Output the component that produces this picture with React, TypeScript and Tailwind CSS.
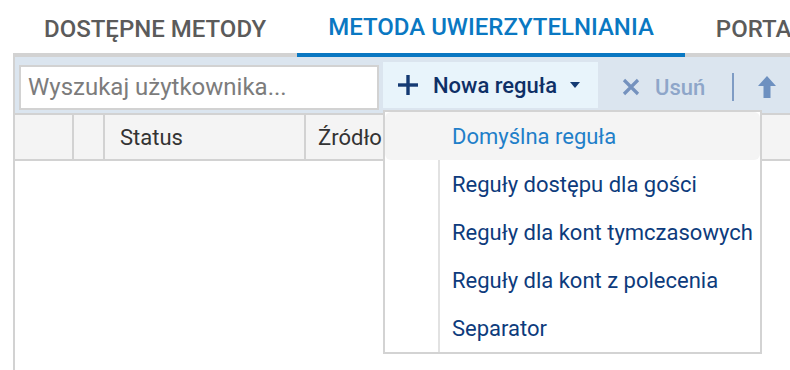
const tabs = ["Dostępne metody", "Metoda uwierzytelniania", "Portal"];
const menuItems = [
  "Domyślna reguła",
  "Reguły dostępu dla gości",
  "Reguły dla kont tymczasowych",
  "Reguły dla kont z polecenia",
  "Separator",
];

const App = () => {
  return (
    <div className="relative w-[790px] h-[370px] overflow-hidden bg-white font-['Roboto',sans-serif]">
      {/* tabs */}
      <div className="flex ml-[13px] border-b-4 border-[#d2d2d2]">
        {tabs.map((t, i) => (
          <div
            key={t}
            className={
              "relative -mb-1 h-[57px] px-[31px] pt-[1px] flex items-center uppercase font-medium text-[24px] whitespace-nowrap " +
              (i === 1
                ? "border-b-4 border-[#0a78c2] text-[#0a78c2]"
                : "text-[#5b5b5b]")
            }
          >
            {t}
          </div>
        ))}
      </div>

      <div className="ml-[13px] border-l-2 border-[#d2d2d2] h-full">
        {/* toolbar */}
        <div className="flex items-center h-[56px] bg-[#dbe5ef] pl-1 pt-[4px]">
          <div className="w-[360px] h-[45px] bg-white border-2 border-[#d2d2d2] flex items-center pl-[7px] text-[24px] text-[#7c7c7c]">
            Wyszukaj użytkownika...
          </div>
          <div className="ml-1 w-[215px] h-[46px] -mt-1 bg-[#e8f4fb] flex items-center pl-[15px] text-[#0e2f66]">
            <svg width="20" height="20" viewBox="0 0 20 20">
              <rect x="8.3" y="0" width="3.4" height="20" fill="#143a73" />
              <rect x="0" y="8.3" width="20" height="3.4" fill="#143a73" />
            </svg>
            <span className="ml-[15px] text-[22px] font-medium">Nowa reguła</span>
            <span className="ml-[13px] w-0 h-0 border-l-[5px] border-r-[5px] border-t-[6px] border-l-transparent border-r-transparent border-t-[#143a73]" />
          </div>
          <div className="flex items-center ml-[24px] text-[#8ea6c9]">
            <svg width="18" height="18" viewBox="0 0 18 18">
              <path d="M2 2 L16 16 M16 2 L2 16" stroke="#7592be" strokeWidth="3.2" />
            </svg>
            <span className="ml-[15px] text-[22px] font-medium">Usuń</span>
          </div>
          <div className="ml-[27px] w-[2px] h-[28px] bg-[#7f9cc4]" />
          <svg width="20" height="24" viewBox="0 0 20 24" className="ml-[23px]">
            <path d="M10 1 L19 11 L13.5 11 L13.5 23 L6.5 23 L6.5 11 L1 11 Z" fill="#6d90c0" />
          </svg>
        </div>

        {/* table header */}
        <div className="flex h-[48px] bg-[#f4f4f4] border-y-2 border-[#d2d2d2] text-[22px] text-[#333]">
          <div className="w-[59px] border-r-2 border-[#d2d2d2]" />
          <div className="w-[31px] border-r-2 border-[#d2d2d2]" />
          <div className="w-[201px] border-r-2 border-[#d2d2d2] flex items-center pl-[15px]">Status</div>
          <div className="flex items-center pl-[12px]">Źródło</div>
        </div>
      </div>

      {/* dropdown menu */}
      <div className="absolute left-[383px] top-[110px] w-[379px] bg-white border-2 border-[#d3d3d3] text-[22px]">
        {menuItems.map((m, i) => (
          <div
            key={m}
            className={
              "flex h-[48px] " + (i === 0 ? "bg-[#f4f4f4] rounded-md text-[#1f7fc9]" : "text-[#0d3b7c]")
            }
          >
            <div className="w-[53px]" />
            <div
              className={
                "flex-1 flex items-center pl-[12px] border-l-2 " +
                (i === 0 ? "border-transparent" : "border-[#e2e2e2]")
              }
            >
              {m}
            </div>
          </div>
        ))}
      </div>
    </div>
  );
};

export default App;
